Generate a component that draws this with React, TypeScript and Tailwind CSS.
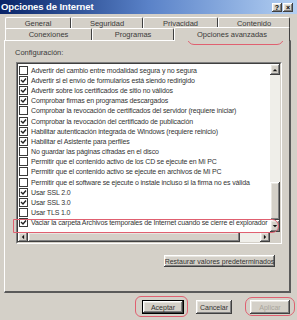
import React from "react";

const btn3d =
  "shadow-[inset_-1px_-1px_#404040,inset_1px_1px_#ffffff,inset_-2px_-2px_#808080,inset_2px_2px_#e8e6e0]";

const rows: [string, boolean][] = [
  ["Advertir del cambio entre modalidad segura y no segura", false],
  ["Advertir si el envío de formularios está siendo redirigido", true],
  ["Advertir sobre los certificados de sitio no válidos", true],
  ["Comprobar firmas en programas descargados", true],
  ["Comprobar la revocación de certificados del servidor (requiere iniciar)", false],
  ["Comprobar la revocación del certificado de publicación", true],
  ["Habilitar autenticación integrada de Windows (requiere reinicio)", true],
  ["Habilitar el Asistente para perfiles", true],
  ["No guardar las páginas cifradas en el disco", false],
  ["Permitir que el contenido activo de los CD se ejecute en Mi PC", false],
  ["Permitir que el contenido activo se ejecute en archivos de Mi PC", false],
  ["Permitir que el software se ejecute o instale incluso si la firma no es válida", false],
  ["Usar SSL 2.0", true],
  ["Usar SSL 3.0", true],
  ["Usar TLS 1.0", false],
  ["Vaciar la carpeta Archivos temporales de Internet cuando se cierre el explorador", true],
];

function Check({ on }: { on: boolean }) {
  return (
    <div className="w-[9px] h-[9px] border border-[#3a3a3a] bg-white flex items-center justify-center shrink-0">
      {on && (
        <svg width="7" height="7" viewBox="0 0 7 7">
          <path d="M1 3 L3 5 L6 1.5" stroke="#222" strokeWidth="1.4" fill="none" />
        </svg>
      )}
    </div>
  );
}

function Tab({ label, w, active }: { label: string; w: number; active?: boolean }) {
  return (
    <div
      style={{ width: w }}
      className={
        "flex items-center justify-center border-t border-l border-white border-r border-r-[#404040] rounded-t-[2px] bg-[#d4d0c8] text-[#3a3a3a] text-[7.5px] " +
        (active ? "h-[14px] -mb-[1px] relative z-10" : "h-[12px]")
      }
    >
      {label}
    </div>
  );
}

function Arrow({ dir }: { dir: "up" | "down" | "left" | "right" }) {
  const pts =
    dir === "up"
      ? "1,4 4,1 7,4"
      : dir === "down"
      ? "1,1 4,4 7,1"
      : dir === "left"
      ? "4,1 1,4 4,7"
      : "1,1 4,4 1,7";
  const vb = dir === "up" || dir === "down" ? "0 0 8 5" : "0 0 5 8";
  const w = dir === "up" || dir === "down" ? 6 : 4;
  const h = dir === "up" || dir === "down" ? 4 : 6;
  return (
    <svg width={w} height={h} viewBox={vb}>
      <polygon points={pts} fill="#111" />
    </svg>
  );
}

export default function App() {
  return (
    <div
      className="relative w-[297px] h-[320px] bg-[#d4d0c8] flex flex-col overflow-hidden text-[7px] leading-none"
      style={{ fontFamily: '"Liberation Sans", Arial, sans-serif' }}
    >
      {/* Title bar */}
      <div className="h-[14px] shrink-0 bg-linear-to-r from-[#0a2468] via-[#5a82c8] to-[#b4d0f2] flex items-center pl-[1px] pr-[4px]">
        <span className="text-white font-bold text-[9.5px] tracking-[-0.1px]">Opciones de Internet</span>
        <div className="ml-auto flex gap-[1px]">
          <div className={"w-[10px] h-[9px] bg-[#d4d0c8] flex items-center justify-center text-[7px] font-bold text-black " + btn3d}>
            ?
          </div>
          <div className={"w-[10px] h-[9px] bg-[#d4d0c8] flex items-center justify-center text-[7px] font-bold text-black " + btn3d}>
            ×
          </div>
        </div>
      </div>

      {/* Tabs */}
      <div className="pl-[5px] pt-[3px] flex flex-col">
        <div className="flex">
          <Tab label="General" w={66} />
          <Tab label="Seguridad" w={72} />
          <Tab label="Privacidad" w={75} />
          <Tab label="Contenido" w={72} />
        </div>
        <div className="flex items-end -mt-[2px]">
          <Tab label="Conexiones" w={87} />
          <Tab label="Programas" w={82} />
          <Tab label="Opciones avanzadas" w={116} active />
        </div>
      </div>

      {/* Panel */}
      <div className="ml-[4px] w-[287px] h-[253px] border-t border-l border-white border-r-2 border-b-2 border-r-[#5a5a5a] border-b-[#5a5a5a] flex flex-col pl-[10px] pt-[8px]">
        <div className="text-[#3a3a3a] h-[9px] text-[7.5px]">Configuración:</div>
        {/* List box */}
        <div className="mt-[4px] ml-[1px] w-[266px] h-[182px] border border-t-[#808080] border-l-[#808080] border-b-white border-r-white">
          <div className="w-full h-full border border-t-[#404040] border-l-[#404040] border-b-[#d4d0c8] border-r-[#d4d0c8] bg-white flex flex-col">
            <div className="flex flex-1 min-h-0">
              <div className="flex-1 overflow-hidden pt-[1px]">
                {rows.map(([t, on], i) => (
                  <div key={i} className="h-[10.2px] flex items-center pl-[1px] gap-[3px] whitespace-nowrap text-[#333] tracking-[-0.15px]">
                    <Check on={on} />
                    <span>{t}</span>
                  </div>
                ))}
              </div>
              {/* vertical scrollbar */}
              <div className="w-[10px] flex flex-col bg-[#efeee9]">
                <div className={"h-[11px] bg-[#d4d0c8] flex items-center justify-center " + btn3d}>
                  <Arrow dir="up" />
                </div>
                <div className="flex-1" />
                <div className={"h-[38px] bg-[#d4d0c8] " + btn3d} />
                <div className={"h-[12px] bg-[#d4d0c8] flex items-center justify-center " + btn3d}>
                  <Arrow dir="down" />
                </div>
              </div>
            </div>
            {/* horizontal scrollbar */}
            <div className="h-[10px] flex bg-[#efeee9]">
              <div className={"w-[10px] bg-[#d4d0c8] flex items-center justify-center " + btn3d}>
                <Arrow dir="left" />
              </div>
              <div className={"w-[212px] bg-[#d4d0c8] " + btn3d} />
              <div className="flex-1" />
              <div className={"w-[10px] bg-[#d4d0c8] flex items-center justify-center " + btn3d}>
                <Arrow dir="right" />
              </div>
              <div className="w-[10px] bg-[#d4d0c8]" />
            </div>
          </div>
        </div>
        <div className="flex justify-end pr-[14px] mt-[11px]">
          <div className={"w-[111px] h-[12px] flex items-center justify-center text-[#333] " + btn3d}>
            Restaurar valores predeterminados
          </div>
        </div>
      </div>

      {/* Bottom buttons */}
      <div className="flex pl-[142px] mt-[7px] gap-[12px]">
        <div className="w-[42px] h-[14px] border border-black flex">
          <div className={"flex-1 flex items-center justify-center text-[#333] " + btn3d}>Aceptar</div>
        </div>
        <div className={"w-[36px] h-[14px] flex items-center justify-center text-[#333] " + btn3d}>Cancelar</div>
        <div className={"ml-[6px] w-[40px] h-[14px] flex items-center justify-center text-[#a8a59c] " + btn3d}>Aplicar</div>
      </div>

      {/* red annotations */}
      <div className="absolute left-[187px] top-[30px] w-[97px] h-[15px] border border-[#e06070] rounded-[7px]" />
      <div className="absolute left-[13px] top-[219px] w-[266px] h-[14px] border border-[#e06070] rounded-r-[7px]" />
      <div className="absolute left-[135px] top-[296px] w-[53px] h-[21px] border border-[#e06070] rounded-[6px]" />
      <div className="absolute left-[245px] top-[297px] w-[50px] h-[19px] border border-[#e06070] rounded-[7px]" />
    </div>
  );
}
